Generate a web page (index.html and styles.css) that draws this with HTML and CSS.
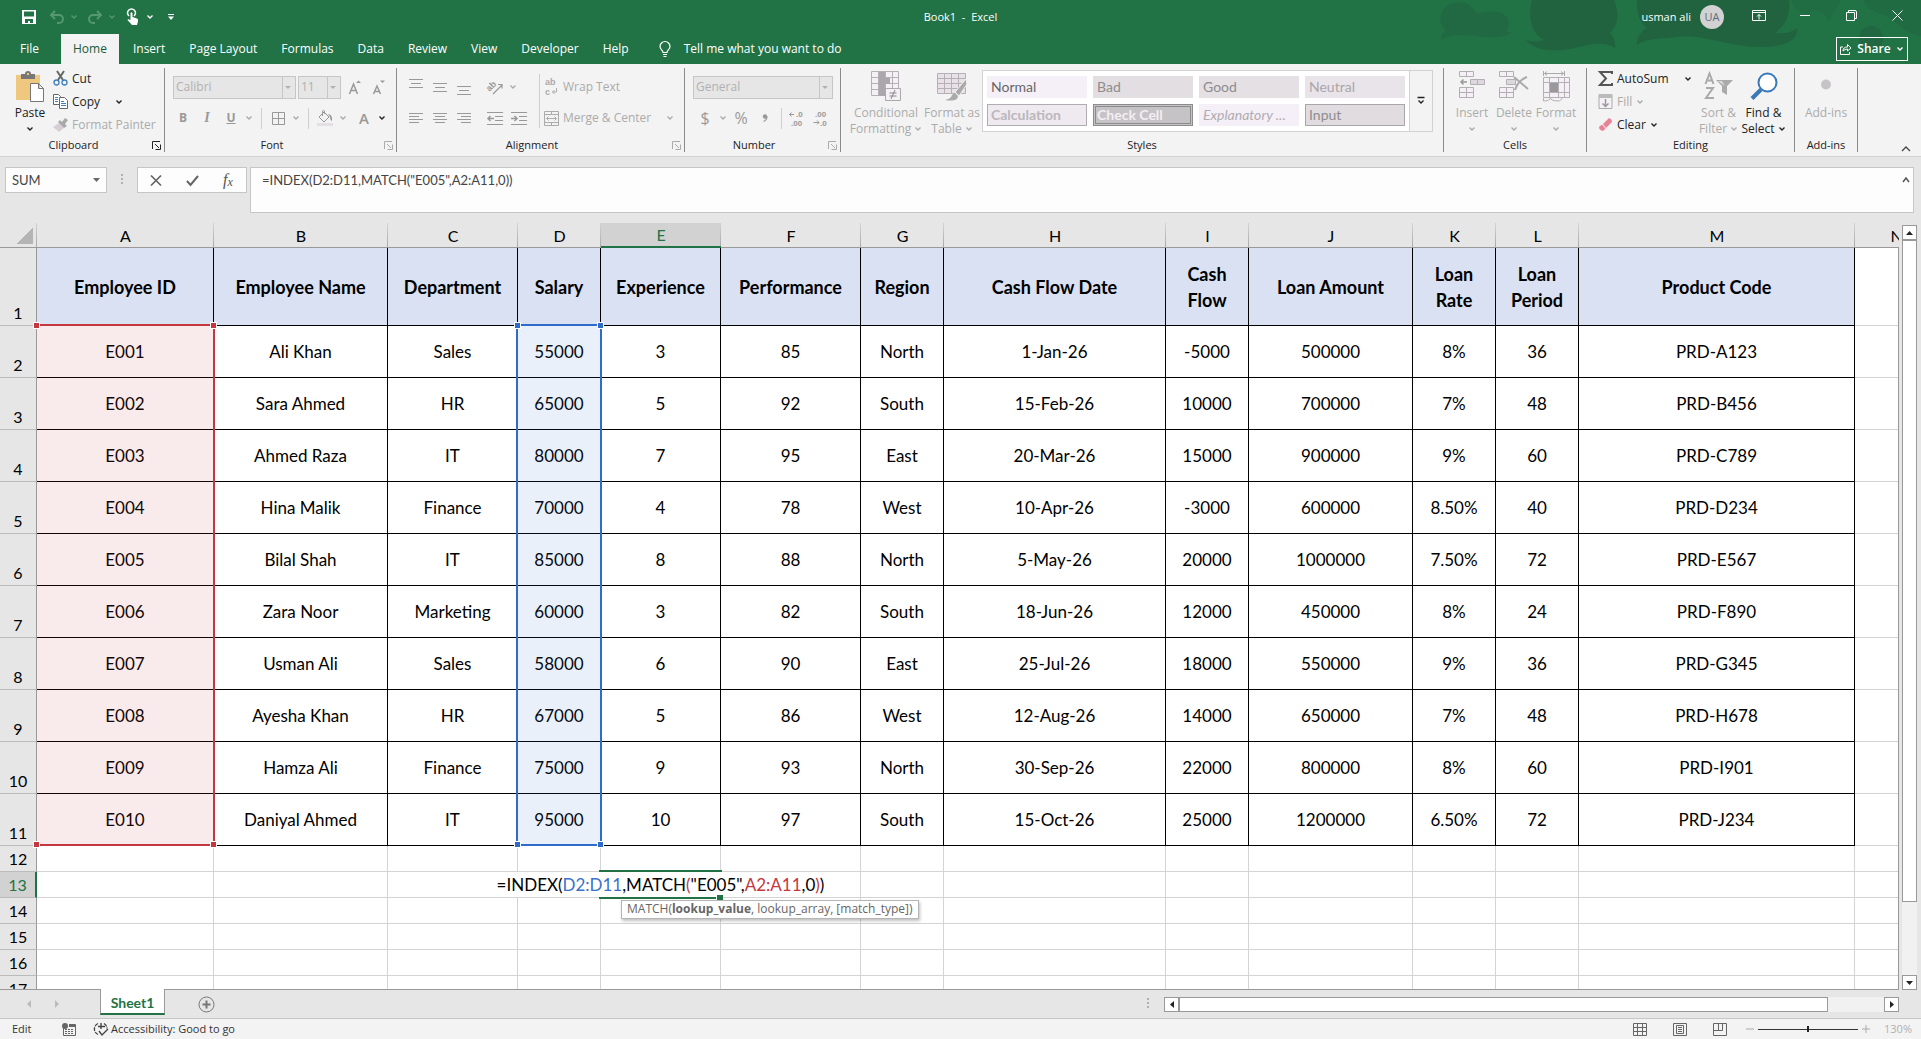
FILE: index.html
```html
<!DOCTYPE html>
<html lang="en">
<head>
    <meta charset="UTF-8">
    <meta name="viewport" content="width=device-width, initial-scale=1.0">
    <title>Book1 - Excel</title>
    <link rel="stylesheet" href="styles.css">
</head>
<body>
    <!-- shared glyphs -->
    <svg class="defs" aria-hidden="true">
        <symbol id="chev" viewBox="0 0 8 8"><path d="M1.5 2.5L4 5l2.5-2.5" fill="none" stroke="currentColor" stroke-width="1.4"/></symbol>
        <symbol id="launch" viewBox="0 0 9 9"><path d="M.5 8V.5H8M3 3l4 4M8.5 3.5v5h-5" fill="none" stroke="currentColor"/></symbol>
    </svg>

    <header class="top">
        <svg class="pattern" viewBox="0 0 520 64" aria-hidden="true">
            <g fill="#22633f">
                <path d="M40 14C44 2 62-2 72 8c2 4 4 6 8 5 14-4 28 0 28 10 0 6-2 8-4 9h7c-4 5-18 6-28 5-16-2-34-4-43 3 0-4 2-8 5-9-4-4-7-10-5-17z" opacity=".6"/>
                <path d="M131 0h82c6 14 4 26-4 33 4 4 6 10 5 15-10-7-24-4-40 0-22 5-44 2-49-9 5 4 12 2 18 1-14-8-16-24-12-40z"/>
                <path d="M236 0h152c2 14-4 26-14 33 10 1 18-1 22-5 2 12-12 19-38 19-32 0-58-14-82-10-18 2-34 2-40 8 0-8 4-14 10-17-8-6-11-16-10-28z"/>
                <circle cx="470" cy="38" r="12" opacity=".7"/>
                <path d="M462 0h58v36c-16-2-20-10-28-16s-26-8-30-20z" opacity=".5"/>
                <path d="M390 0h50c-4 8-8 14-12 22-4-10-14-16-22-8-6 0-14-6-16-14z" opacity=".4"/>
            </g>
        </svg>
        <div class="titlebar">
            <div class="quick">
                <button aria-label="Save"><svg width="14" height="14" viewBox="0 0 14 14"><path fill="#fff" fill-rule="evenodd" d="M0 0h14v14H0zM2 1.500v5h10v-5zM3 9v4h3v-2h2v2h3V9z"/></svg></button>
                <button aria-label="Undo" class="faint"><svg width="14" height="14" viewBox="0 0 14 14"><path d="M1 5h8a4 4 0 010 8H7M5 1L1 5l4 4" fill="none" stroke="currentColor" stroke-width="2"/></svg></button>
                <button aria-label="Undo list" class="faint small"><svg width="8" height="8"><use href="#chev"/></svg></button>
                <button aria-label="Redo" class="faint"><svg width="14" height="14" viewBox="0 0 14 14"><path d="M13 5H5a4 4 0 000 8h2M9 1l4 4-4 4" fill="none" stroke="currentColor" stroke-width="2"/></svg></button>
                <button aria-label="Redo list" class="faint small"><svg width="8" height="8"><use href="#chev"/></svg></button>
                <button aria-label="Touch mode"><svg width="12" height="17" viewBox="0 0 12 17"><path d="M2 7a4 4 0 115 0" fill="none" stroke="#fff" stroke-width="1.500"/><path fill="#fff" d="M3.500 4q1-1.500 2 0v4l4.500 1.500q1.500.5 1 3L10 16H5L.5 11q0-1.500 3 0z"/></svg></button>
                <button aria-label="Touch mode list" class="small"><svg width="8" height="8"><use href="#chev"/></svg></button>
                <button aria-label="Customize toolbar"><svg width="6" height="6" viewBox="0 0 6 6"><path d="M0 .5h6" stroke="#fff"/><path d="M0 2.500h6L3 6z" fill="#fff"/></svg></button>
            </div>
            <div class="title">Book1&nbsp; -&nbsp; Excel</div>
            <div class="account">
                <span>usman ali</span>
                <span class="avatar">UA</span>
                <button aria-label="Ribbon display options"><svg width="14" height="11" viewBox="0 0 14 11"><path d="M.5.5h13v10H.5zM.5 2.500h13M7 9.500V4.500M5 6.500l2-2 2 2" fill="none" stroke="#fff"/></svg></button>
                <button aria-label="Minimize"><svg width="10" height="11" viewBox="0 0 10 11"><path d="M0 5.500h10" stroke="#fff"/></svg></button>
                <button aria-label="Restore"><svg width="11" height="11" viewBox="0 0 11 11"><path d="M.5 2.500h8v8h-8zM2.500 2.500V.5H9q1.500 0 1.500 1.500v6.500h-2" fill="none" stroke="#fff"/></svg></button>
                <button aria-label="Close"><svg width="11" height="11" viewBox="0 0 11 11"><path d="M.5.5l10 10M10.500.5l-10 10" stroke="#fff"/></svg></button>
            </div>
        </div>
        <nav class="tabs">
            <a href="#" class="file">File</a>
            <a href="#" class="active">Home</a>
            <a href="#">Insert</a>
            <a href="#">Page Layout</a>
            <a href="#">Formulas</a>
            <a href="#">Data</a>
            <a href="#">Review</a>
            <a href="#">View</a>
            <a href="#">Developer</a>
            <a href="#">Help</a>
            <a href="#" class="tellme"><svg width="12" height="17" viewBox="0 0 12 17"><path d="M4 11.500C4 9 1 8.500 1 5.500a5 5 0 0110 0c0 3-3 3.500-3 6zM4 13.500h4M4.500 15.500h3" fill="none" stroke="#fff" stroke-width="1.200"/></svg>Tell me what you want to do</a>
            <button class="share"><svg width="12" height="12" viewBox="0 0 12 12"><path d="M3 4H.5v7.500h9V9M3 8q0-4 4.500-4V1.500L11 5 7.500 8V6Q5 6 3 8z" fill="none" stroke="#fff"/></svg>Share<svg width="8" height="8"><use href="#chev"/></svg></button>
        </nav>
    </header>

    <section class="ribbon">
        <div class="group clipboard">
            <div class="body">
                <button class="big paste">
                    <svg width="30" height="31" viewBox="0 0 30 31"><path fill="#edc87e" d="M1 4h24v25H1z"/><path fill="#777" d="M6 3h4q0-3 3-3t3 3h4v5H6z"/><path fill="#edc87e" d="M12 2h2v2h-2z"/><path d="M15.500 12.500h8l5 5v13h-13zM23.500 12.500v5h5" fill="#fff" stroke="#777"/></svg>
                    <span>Paste</span>
                    <svg width="8" height="8"><use href="#chev"/></svg>
                </button>
                <div class="stack">
                    <button><svg width="15" height="15" viewBox="0 0 15 15"><path d="M4 0l6 9M11 0L5 9" stroke="#666" stroke-width="2"/><circle cx="3.500" cy="11.500" r="2.500" fill="none" stroke="#3e7ebd" stroke-width="1.300"/><circle cx="11.500" cy="11.500" r="2.500" fill="none" stroke="#3e7ebd" stroke-width="1.300"/></svg>Cut</button>
                    <button><svg width="15" height="15" viewBox="0 0 15 15"><path d="M.5.5h5l2 2v8h-7z" fill="#fff" stroke="#666"/><path d="M2 3.500h3M2 5.500h3M2 7.500h3" stroke="#3e7ebd"/><path d="M6.500 3.500h5l3 3v8h-8z" fill="#fff" stroke="#666"/><path d="M8 7.500h3M8 9.500h5M8 11.500h5" stroke="#3e7ebd"/></svg>Copy<svg class="far" width="8" height="8"><use href="#chev"/></svg></button>
                    <button disabled><svg width="15" height="14" viewBox="0 0 15 14"><path fill="#d5cfd5" d="M0 9l6-4 5 5-5 4z"/><path fill="#a9a9a9" d="M5 4l2-2 2 2 3-4 3 2-3 4 2 2-3 2z"/></svg>Format Painter</button>
                </div>
            </div>
            <div class="caption"><span>Clipboard</span><button aria-label="Clipboard options"><svg width="9" height="9"><use href="#launch"/></svg></button></div>
        </div>

        <div class="group font">
            <div class="body rows">
                <div class="row">
                    <span class="combo name"><select aria-label="Font" disabled><option>Calibri</option></select></span>
                    <span class="combo size"><select aria-label="Font size" disabled><option>11</option></select></span>
                    <button class="tool" disabled aria-label="Increase font size"><svg width="14" height="15" viewBox="0 0 14 15"><path d="M1.500 14L5.500 4l4 10M3 10.500h5" fill="none" stroke="currentColor" stroke-width="1.500"/><path d="M8 3l2.500-2.500L13 3z" fill="currentColor"/></svg></button>
                    <button class="tool" disabled aria-label="Decrease font size"><svg width="14" height="15" viewBox="0 0 14 15"><path d="M1.500 14L5 6l3.500 8M3 11.500h4" fill="none" stroke="currentColor" stroke-width="1.500"/><path d="M8 .5h5L10.500 3z" fill="currentColor"/></svg></button>
                </div>
                <div class="row">
                    <button class="tool" disabled><b>B</b></button>
                    <button class="tool" disabled><i>I</i></button>
                    <button class="tool" disabled><u>U</u></button>
                    <button class="drop" disabled aria-label="Underline list"><svg width="8" height="8"><use href="#chev"/></svg></button>
                    <span class="line"></span>
                    <button class="tool" disabled aria-label="Borders"><svg width="13" height="13" viewBox="0 0 13 13"><path d="M.5.5h12v12H.5zM6.500.5v12M.5 6.500h12" fill="none" stroke="currentColor"/></svg></button>
                    <button class="drop" disabled aria-label="Borders list"><svg width="8" height="8"><use href="#chev"/></svg></button>
                    <span class="line"></span>
                    <button class="tool" disabled aria-label="Fill color"><svg width="16" height="16" viewBox="0 0 16 16"><path d="M0 13h16v3H0z" fill="#e5dfe3"/><path d="M2 7l5-5 5 5-5 5zM5.500 6V1q1.500-1.500 2 0v3" fill="none" stroke="currentColor"/><path d="M11 4q5 1 4 7-2-1-2-4z" fill="currentColor"/></svg></button>
                    <button class="drop" disabled aria-label="Fill color list"><svg width="8" height="8"><use href="#chev"/></svg></button>
                    <button class="tool letter" disabled>A</button>
                    <button class="drop" aria-label="Font color list"><svg width="8" height="8"><use href="#chev"/></svg></button>
                </div>
            </div>
            <div class="caption"><span>Font</span><button disabled aria-label="Font options"><svg width="9" height="9"><use href="#launch"/></svg></button></div>
        </div>

        <div class="group align">
            <div class="body">
                <div class="rows">
                    <div class="row">
                        <button class="tool" disabled aria-label="Top align"><svg width="14" height="16" viewBox="0 0 14 16"><path d="M0 .5h14M2 4.500h10M0 8.500h14" stroke="currentColor"/></svg></button>
                        <button class="tool" disabled aria-label="Middle align"><svg width="14" height="16" viewBox="0 0 14 16"><path d="M0 4.500h14M2 8.500h10M0 12.500h14" stroke="currentColor"/></svg></button>
                        <button class="tool" disabled aria-label="Bottom align"><svg width="14" height="16" viewBox="0 0 14 16"><path d="M0 7.500h14M2 11.500h10M0 15.500h14" stroke="currentColor"/></svg></button>
                        <span class="gap"></span>
                        <button class="tool" disabled aria-label="Orientation"><svg width="16" height="16" viewBox="0 0 16 16"><text x="0" y="9" font-size="9" font-weight="700" fill="currentColor" transform="rotate(-45 6 8)">ab</text><path d="M6 15l9-9M11 5.500h4v4" fill="none" stroke="currentColor" stroke-width="1.200"/></svg></button>
                        <button class="drop" disabled aria-label="Orientation list"><svg width="8" height="8"><use href="#chev"/></svg></button>
                    </div>
                    <div class="row">
                        <button class="tool" disabled aria-label="Align left"><svg width="14" height="11" viewBox="0 0 14 11"><path d="M0 .5h14M0 3.500h10M0 6.500h14M0 9.500h10" stroke="currentColor"/></svg></button>
                        <button class="tool" disabled aria-label="Center"><svg width="14" height="11" viewBox="0 0 14 11"><path d="M0 .5h14M2 3.500h10M0 6.500h14M2 9.500h10" stroke="currentColor"/></svg></button>
                        <button class="tool" disabled aria-label="Align right"><svg width="14" height="11" viewBox="0 0 14 11"><path d="M0 .5h14M4 3.500h10M0 6.500h14M4 9.500h10" stroke="currentColor"/></svg></button>
                        <span class="gap"></span>
                        <button class="tool" disabled aria-label="Decrease indent"><svg width="16" height="13" viewBox="0 0 16 13"><path d="M0 .5h16M8 4.500h8M8 8.500h8M0 12.500h16" stroke="currentColor"/><path d="M7 6.500H1M3.500 4L1 6.500 3.500 9" fill="none" stroke="currentColor" stroke-width="1.500"/></svg></button>
                        <button class="tool" disabled aria-label="Increase indent"><svg width="16" height="13" viewBox="0 0 16 13"><path d="M0 .5h16M8 4.500h8M8 8.500h8M0 12.500h16" stroke="currentColor"/><path d="M0 6.500h6M3.500 4L6 6.500 3.500 9" fill="none" stroke="currentColor" stroke-width="1.500"/></svg></button>
                    </div>
                </div>
                <span class="line tall"></span>
                <div class="rows">
                    <div class="row"><button class="wide" disabled><svg width="15" height="18" viewBox="0 0 15 18"><text x="1" y="7" font-size="9" font-weight="700" fill="currentColor">ab</text><text x="1" y="17" font-size="9" font-weight="700" fill="currentColor">c</text><path d="M12.500 10v4H8.500M10.500 12l-2 2 2 2" fill="none" stroke="currentColor"/></svg>Wrap Text</button></div>
                    <div class="row"><button class="wide" disabled><svg width="15" height="15" viewBox="0 0 15 15"><path d="M.5.5h14v14H.5zM.5 3.500h14M.5 11.500h14M7.500.5v3M7.500 11.500v3M2.500 7.500h10M4.500 5.500l-2 2 2 2M10.500 5.500l2 2-2 2" fill="none" stroke="currentColor"/></svg>Merge &amp; Center<svg class="far" width="8" height="8"><use href="#chev"/></svg></button></div>
                </div>
            </div>
            <div class="caption"><span>Alignment</span><button disabled aria-label="Alignment options"><svg width="9" height="9"><use href="#launch"/></svg></button></div>
        </div>

        <div class="group number">
            <div class="body rows">
                <div class="row"><span class="combo format"><select aria-label="Number format" disabled><option>General</option></select></span></div>
                <div class="row marks">
                    <button class="tool sign" disabled>$</button>
                    <button class="drop" disabled aria-label="Currency list"><svg width="8" height="8"><use href="#chev"/></svg></button>
                    <button class="tool sign pct" disabled>%</button>
                    <button class="tool" disabled aria-label="Comma style"><svg width="6" height="8" viewBox="0 0 6 8"><circle cx="3" cy="2.500" r="2.200" fill="currentColor"/><path d="M5 2.500Q5 6 1.500 7.500" fill="none" stroke="currentColor" stroke-width="1.300"/></svg></button>
                    <span class="line"></span>
                    <button class="tool" disabled aria-label="Increase decimal"><svg width="15" height="16" viewBox="0 0 15 16"><path d="M5 4.500H.5M2.500 2.500l-2 2 2 2" fill="none" stroke="currentColor"/><text x="7" y="7" font-size="8" font-weight="700" fill="currentColor">.0</text><text x="2" y="16" font-size="8" font-weight="700" fill="currentColor">.00</text></svg></button>
                    <button class="tool" disabled aria-label="Decrease decimal"><svg width="15" height="16" viewBox="0 0 15 16"><path d="M.5 12.500H6M4 10.500l2 2-2 2" fill="none" stroke="currentColor"/><text x="2" y="7" font-size="8" font-weight="700" fill="currentColor">.00</text><text x="7" y="16" font-size="8" font-weight="700" fill="currentColor">.0</text></svg></button>
                </div>
            </div>
            <div class="caption"><span>Number</span><button disabled aria-label="Number options"><svg width="9" height="9"><use href="#launch"/></svg></button></div>
        </div>

        <div class="group styles">
            <div class="body">
                <button class="big cond" disabled>
                    <svg width="30" height="31" viewBox="0 0 30 31"><path d="M.5.500h27v24H.5zM.5 6.500h27M.5 12.500h27M.5 18.500h27M7.500.5v24M14.500.5v24M21.500.5v24" fill="#f5eff6" stroke="#b5b0b4"/><path fill="#aaa6aa" d="M8 1h6v6h5v6h-5v12H8z"/><path d="M14.500 17.500h15v12h-15z" fill="#f5eff6" stroke="#aaa"/><path d="M18.500 22h7M18.500 25h7M24 19l-4 9" stroke="#888"/></svg>
                    <span>Conditional</span>
                    <span>Formatting <svg width="8" height="8"><use href="#chev"/></svg></span>
                </button>
                <button class="big fmt" disabled>
                    <svg width="30" height="31" viewBox="0 0 30 31"><path d="M.5 2.500h28v20H.5zM.5 7.500h28M.5 12.500h28M.5 17.500h28M7.500 2.500v20M14.500 2.500v20M21.500 2.500v20" fill="#e8e2e8" stroke="#b5b0b4"/><path d="M29 8L18 21l4 4 8-12z" fill="#aaa" stroke="#f3f3f3"/><path d="M8 29q6-1 7-5 3-3 6 1 0 6-13 4z" fill="#aaa"/></svg>
                    <span>Format as</span>
                    <span>Table <svg width="8" height="8"><use href="#chev"/></svg></span>
                </button>
                <div class="gallery">
                    <div class="swatches">
                        <button class="normal">Normal</button>
                        <button class="bad">Bad</button>
                        <button class="good">Good</button>
                        <button class="neutral">Neutral</button>
                        <button class="calc">Calculation</button>
                        <button class="check">Check Cell</button>
                        <button class="expl">Explanatory ...</button>
                        <button class="input">Input</button>
                    </div>
                    <button class="more" aria-label="More styles"><svg width="8" height="8" viewBox="0 0 8 8"><path d="M.5.500h7M1.500 3.500L4 6l2.500-2.500" fill="none" stroke="#222" stroke-width="1.300"/></svg></button>
                </div>
            </div>
            <div class="caption"><span>Styles</span></div>
        </div>

        <div class="group cells">
            <div class="body">
                <button class="big" disabled>
                    <svg width="28" height="31" viewBox="0 0 28 31"><g fill="#f5eff6" stroke="#b3aeb3"><path d="M1.500.5h14v5h-14zM8.500.5v5"/><path d="M12.500 8.500h14v5h-14zM19.500 8.500v5" fill="#ddd8dd"/><path d="M1.500 16.500h14v10h-14zM8.500 16.500v10M1.500 21.500h14"/></g><path d="M9 11H3M5.500 8.500L3 11l2.500 2.500" fill="none" stroke="#999" stroke-width="1.500"/></svg>
                    <span>Insert</span>
                    <svg width="8" height="8"><use href="#chev"/></svg>
                </button>
                <button class="big" disabled>
                    <svg width="30" height="31" viewBox="0 0 30 31"><g fill="#f5eff6" stroke="#b3aeb3"><path d="M.5.5h14v5H.5zM7.500.5v5"/><path d="M7.500 8.500h9v5h-9z" fill="#ddd8dd"/><path d="M.5 16.500h14v10H.5zM7.500 16.500v10M.5 21.500h14"/></g><path d="M15 6l14 12M28 6q-9 3-12 13" fill="none" stroke="#aaa" stroke-width="2"/></svg>
                    <span>Delete</span>
                    <svg width="8" height="8"><use href="#chev"/></svg>
                </button>
                <button class="big" disabled>
                    <svg width="29" height="31" viewBox="0 0 29 31"><path d="M1.500 0v5M22.500 0v5M2 2.500h20M5 .5l-2.500 2L5 4.500M19 .5l2.500 2-2.500 2" fill="none" stroke="#aaa"/><path d="M1.500 6.500h26v20h-26zM1.500 11.500h26M1.500 21.500h26M7.500 6.500v20M16.500 6.500v20M22.500 6.500v20" fill="#f5eff6" stroke="#b5b0b4"/><path d="M8 12h8v9H8z" fill="#999"/><path d="M1.500 27v3q6 0 7-3 0 3 9 3l3-3" fill="none" stroke="#b5b0b4"/></svg>
                    <span>Format</span>
                    <svg width="8" height="8"><use href="#chev"/></svg>
                </button>
            </div>
            <div class="caption"><span>Cells</span></div>
        </div>

        <div class="group editing">
            <div class="body">
                <div class="stack">
                    <button><svg width="15" height="15" viewBox="0 0 15 15"><path d="M14 3V1H2l6 6.500L2 14h12v-2" fill="none" stroke="#555" stroke-width="2"/></svg>AutoSum<svg class="far" width="8" height="8"><use href="#chev"/></svg></button>
                    <button disabled><svg width="15" height="15" viewBox="0 0 15 15"><path d="M1 .5h13v14H1z" fill="#f5eff6" stroke="currentColor"/><path d="M1 0h13v4H1z" fill="#bbb"/><path d="M7.500 5v7M4.500 9.500l3 3 3-3" fill="none" stroke="#999" stroke-width="1.500"/></svg>Fill<svg width="8" height="8"><use href="#chev"/></svg></button>
                    <button><svg width="15" height="14" viewBox="0 0 15 14"><path fill="#ea8296" d="M5 6l6-6q3 1 3 4L8 10z"/><path fill="#ea8296" d="M1 9l3-2.500 3.500 4L5 13q-4-1-4-4z"/></svg>Clear<svg width="8" height="8"><use href="#chev"/></svg></button>
                </div>
                <button class="big" disabled>
                    <svg width="30" height="29" viewBox="0 0 30 29"><path d="M1.500 12l4-10.500 4 10.500M3 8.500h5M2 16h7L2 26h8" fill="none" stroke="#aaa" stroke-width="2"/><path d="M12 8h17l-6 6v9l-5-3v-6z" fill="#aaa"/><path d="M14 9h4l3 5z" fill="#ddd"/></svg>
                    <span>Sort &amp;</span>
                    <span>Filter <svg width="8" height="8"><use href="#chev"/></svg></span>
                </button>
                <button class="big">
                    <svg width="28" height="28" viewBox="0 0 28 28"><path d="M2 26l9-9" stroke="#3b78b8" stroke-width="4"/><circle cx="17.500" cy="10" r="9" fill="#fff" stroke="#3b78b8" stroke-width="2"/></svg>
                    <span>Find &amp;</span>
                    <span>Select <svg width="8" height="8"><use href="#chev"/></svg></span>
                </button>
            </div>
            <div class="caption"><span>Editing</span></div>
        </div>

        <div class="group addins">
            <div class="body">
                <button class="big" disabled>
                    <svg width="28" height="28" viewBox="0 0 28 28"><circle cx="14" cy="12" r="5" fill="#c6c4c6"/></svg>
                    <span>Add-ins</span>
                </button>
            </div>
            <div class="caption"><span>Add-ins</span></div>
        </div>
        <button class="collapse" aria-label="Collapse ribbon"><svg width="10" height="6" viewBox="0 0 10 6"><path d="M1 5l4-4 4 4" fill="none" stroke="#444" stroke-width="1.300"/></svg></button>
    </section>

    <section class="formulabar">
        <div class="namebox"><input type="text" aria-label="Name box" value="SUM"><button aria-label="Names"><svg width="7" height="4" viewBox="0 0 7 4"><path d="M0 0h7L3.500 4z" fill="#666"/></svg></button></div>
        <span class="dots"></span>
        <div class="entry">
            <button aria-label="Cancel"><svg width="12" height="11" viewBox="0 0 12 11"><path d="M1 .5l10 10M11 .5l-10 10" stroke="#666" stroke-width="1.700"/></svg></button>
            <button aria-label="Enter"><svg width="13" height="11" viewBox="0 0 13 11"><path d="M1 6l3.500 4L12 1" fill="none" stroke="#666" stroke-width="2"/></svg></button>
            <button aria-label="Insert function" class="fx">f<small>x</small></button>
        </div>
        <div class="formula">
            <textarea aria-label="Formula" rows="2" spellcheck="false">=INDEX(D2:D11,MATCH("E005",A2:A11,0))</textarea>
            <button aria-label="Collapse formula bar"><svg width="8" height="6" viewBox="0 0 8 6"><path d="M1 5l3-4 3 4" fill="none" stroke="#555" stroke-width="1.500"/></svg></button>
        </div>
    </section>

    <main class="work">
        <div class="grid">
            <table>
                <colgroup>
                    <col class="c-row"><col class="c-a"><col class="c-b"><col class="c-c"><col class="c-s"><col class="c-e"><col class="c-f"><col class="c-s"><col class="c-h"><col class="c-s"><col class="c-j"><col class="c-s"><col class="c-s"><col class="c-m"><col class="c-s">
                </colgroup>
                <thead>
                    <tr><th class="corner"></th><th>A</th><th>B</th><th>C</th><th>D</th><th class="on">E</th><th>F</th><th>G</th><th>H</th><th>I</th><th>J</th><th>K</th><th>L</th><th>M</th><th>N</th></tr>
                </thead>
                <tbody class="data">
                    <tr class="head"><th>1</th><td>Employee ID</td><td>Employee Name</td><td>Department</td><td>Salary</td><td>Experience</td><td>Performance</td><td>Region</td><td>Cash Flow Date</td><td>Cash Flow</td><td>Loan Amount</td><td>Loan Rate</td><td>Loan Period</td><td>Product Code</td><td></td></tr>
                    <tr><th>2</th><td>E001<span class="range red"><i></i><i></i><i></i><i></i></span></td><td>Ali Khan</td><td>Sales</td><td>55000<span class="range blue"><i></i><i></i><i></i><i></i></span></td><td>3</td><td>85</td><td>North</td><td>1-Jan-26</td><td>-5000</td><td>500000</td><td>8%</td><td>36</td><td>PRD-A123</td><td></td></tr>
                    <tr><th>3</th><td>E002</td><td>Sara Ahmed</td><td>HR</td><td>65000</td><td>5</td><td>92</td><td>South</td><td>15-Feb-26</td><td>10000</td><td>700000</td><td>7%</td><td>48</td><td>PRD-B456</td><td></td></tr>
                    <tr><th>4</th><td>E003</td><td>Ahmed Raza</td><td>IT</td><td>80000</td><td>7</td><td>95</td><td>East</td><td>20-Mar-26</td><td>15000</td><td>900000</td><td>9%</td><td>60</td><td>PRD-C789</td><td></td></tr>
                    <tr><th>5</th><td>E004</td><td>Hina Malik</td><td>Finance</td><td>70000</td><td>4</td><td>78</td><td>West</td><td>10-Apr-26</td><td>-3000</td><td>600000</td><td>8.50%</td><td>40</td><td>PRD-D234</td><td></td></tr>
                    <tr><th>6</th><td>E005</td><td>Bilal Shah</td><td>IT</td><td>85000</td><td>8</td><td>88</td><td>North</td><td>5-May-26</td><td>20000</td><td>1000000</td><td>7.50%</td><td>72</td><td>PRD-E567</td><td></td></tr>
                    <tr><th>7</th><td>E006</td><td>Zara Noor</td><td>Marketing</td><td>60000</td><td>3</td><td>82</td><td>South</td><td>18-Jun-26</td><td>12000</td><td>450000</td><td>8%</td><td>24</td><td>PRD-F890</td><td></td></tr>
                    <tr><th>8</th><td>E007</td><td>Usman Ali</td><td>Sales</td><td>58000</td><td>6</td><td>90</td><td>East</td><td>25-Jul-26</td><td>18000</td><td>550000</td><td>9%</td><td>36</td><td>PRD-G345</td><td></td></tr>
                    <tr><th>9</th><td>E008</td><td>Ayesha Khan</td><td>HR</td><td>67000</td><td>5</td><td>86</td><td>West</td><td>12-Aug-26</td><td>14000</td><td>650000</td><td>7%</td><td>48</td><td>PRD-H678</td><td></td></tr>
                    <tr><th>10</th><td>E009</td><td>Hamza Ali</td><td>Finance</td><td>75000</td><td>9</td><td>93</td><td>North</td><td>30-Sep-26</td><td>22000</td><td>800000</td><td>8%</td><td>60</td><td>PRD-I901</td><td></td></tr>
                    <tr><th>11</th><td>E010</td><td>Daniyal Ahmed</td><td>IT</td><td>95000</td><td>10</td><td>97</td><td>South</td><td>15-Oct-26</td><td>25000</td><td>1200000</td><td>6.50%</td><td>72</td><td>PRD-J234</td><td></td></tr>
                </tbody>
                <tbody class="blank">
                    <tr><th>12</th><td></td><td></td><td></td><td></td><td></td><td></td><td></td><td></td><td></td><td></td><td></td><td></td><td></td><td></td></tr>
                    <tr><th class="on">13</th><td></td><td></td><td></td><td></td><td class="editing-cell"><div class="edit"><span>=INDEX(<span class="ref-blue">D2:D11</span>,MATCH<span class="ref-red">(</span>"E005",<span class="ref-red">A2:A11</span>,0<span class="ref-red">)</span>)</span></div><div class="frame"></div><div class="hint">MATCH(<b>lookup_value</b>, lookup_array, [match_type])</div></td><td></td><td></td><td></td><td></td><td></td><td></td><td></td><td></td><td></td></tr>
                    <tr><th>14</th><td></td><td></td><td></td><td></td><td></td><td></td><td></td><td></td><td></td><td></td><td></td><td></td><td></td><td></td></tr>
                    <tr><th>15</th><td></td><td></td><td></td><td></td><td></td><td></td><td></td><td></td><td></td><td></td><td></td><td></td><td></td><td></td></tr>
                    <tr><th>16</th><td></td><td></td><td></td><td></td><td></td><td></td><td></td><td></td><td></td><td></td><td></td><td></td><td></td><td></td></tr>
                    <tr><th>17</th><td></td><td></td><td></td><td></td><td></td><td></td><td></td><td></td><td></td><td></td><td></td><td></td><td></td><td></td></tr>
                </tbody>
            </table>
        </div>
        <div class="vscroll">
            <button aria-label="Scroll up"><svg width="7" height="4" viewBox="0 0 7 4"><path d="M0 4h7L3.500 0z" fill="#222"/></svg></button>
            <div class="track"><div class="thumb"></div></div>
            <button aria-label="Scroll down"><svg width="7" height="4" viewBox="0 0 7 4"><path d="M0 0h7L3.500 4z" fill="#222"/></svg></button>
        </div>
    </main>

    <div class="sheets">
        <button class="nav" aria-label="Previous sheet"><svg width="4" height="8" viewBox="0 0 4 8"><path d="M4 0v8L0 4z" fill="#bbb"/></svg></button>
        <button class="nav" aria-label="Next sheet"><svg width="4" height="8" viewBox="0 0 4 8"><path d="M0 0v8l4-4z" fill="#bbb"/></svg></button>
        <a href="#" class="sheet">Sheet1</a>
        <button class="add" aria-label="New sheet"><svg width="17" height="17" viewBox="0 0 17 17"><circle cx="8.500" cy="8.500" r="7.500" fill="none" stroke="#777"/><path d="M8.500 4.500v8M4.500 8.500h8" stroke="#777" stroke-width="2"/></svg></button>
        <span class="dots"></span>
        <div class="hscroll">
            <button aria-label="Scroll left"><svg width="4" height="7" viewBox="0 0 4 7"><path d="M4 0v7L0 3.500z" fill="#222"/></svg></button>
            <div class="track"><div class="thumb"></div></div>
            <button aria-label="Scroll right"><svg width="4" height="7" viewBox="0 0 4 7"><path d="M0 0v7l4-3.500z" fill="#222"/></svg></button>
        </div>
    </div>

    <footer class="status">
        <span class="mode">Edit</span>
        <button aria-label="Record macro"><svg width="14" height="13" viewBox="0 0 14 13"><path d="M1.500 5v7.500h12v-11H7" fill="none" stroke="#666"/><circle cx="3" cy="3" r="3" fill="#666"/><path d="M7 1h6v3H7z" fill="#666"/><path d="M3 6.500h9M3 8.500h9M3 10.500h9" stroke="#666" stroke-dasharray="2 1"/></svg></button>
        <button class="access"><svg width="16" height="14" viewBox="0 0 16 14"><path d="M5 1.500A6 6 0 005 12.500M11 1.500q3 2 3 5" fill="none" stroke="#444" stroke-width="1.300" stroke-dasharray="4 1"/><path d="M8 1v6M5 4.500h7M6 9l3 4 6-6" fill="none" stroke="#444" stroke-width="1.400"/></svg>Accessibility: Good to go</button>
        <div class="views">
            <button aria-label="Normal view"><svg width="14" height="13" viewBox="0 0 14 13"><path d="M.5.500h13v12H.5zM.5 4.500h13M.5 8.500h13M4.500.5v12M9.500.5v12" fill="none" stroke="#666"/></svg></button>
            <button aria-label="Page layout view"><svg width="14" height="13" viewBox="0 0 14 13"><path d="M.5.500h13v12H.5zM3.500 2.500h7v8h-7zM5 4.500h4M5 6.500h4M5 8.500h4" fill="none" stroke="#666"/></svg></button>
            <button aria-label="Page break view"><svg width="14" height="13" viewBox="0 0 14 13"><path d="M.5.500h13v12H.5zM.5 7.500h9v-7M5.500.5v7" fill="none" stroke="#666"/></svg></button>
        </div>
        <div class="zoom">
            <button disabled aria-label="Zoom out"><svg width="8" height="8" viewBox="0 0 8 8"><path d="M0 4h8" stroke="#aaa"/></svg></button>
            <input type="range" min="0" max="100" value="50" aria-label="Zoom">
            <button disabled aria-label="Zoom in"><svg width="8" height="8" viewBox="0 0 8 8"><path d="M0 4h8M4 0v8" stroke="#aaa"/></svg></button>
            <span>130%</span>
        </div>
    </footer>
</body>
</html>
```
FILE: styles.css
```css
* {
    box-sizing: border-box;
}
body {
    margin: 0;
    height: 100vh;
    display: flex;
    flex-direction: column;
    overflow: hidden;
    background: #e6e6e6;
    color: #222;
    font: 11px/16px "Open Sans", "Noto Sans", sans-serif;
}
button, input, select, textarea {
    font: inherit;
    color: inherit;
    background: none;
    border: none;
    margin: 0;
    padding: 0;
    outline: none;
}
button {
    display: flex;
    align-items: center;
    justify-content: center;
    white-space: nowrap;
}
button:disabled {
    color: #ababab;
}
a {
    color: inherit;
    text-decoration: none;
}
svg {
    display: block;
    flex: none;
    overflow: visible;
}
svg text {
    font-family: "Liberation Sans", sans-serif;
}
.defs {
    position: absolute;
    width: 0;
    height: 0;
}

/* title bar and tabs */
.top {
    position: relative;
    background: #217346;
    color: #fff;
}
.pattern {
    position: absolute;
    top: 0;
    right: 0;
    width: 520px;
    height: 64px;
    overflow: hidden;
}
.titlebar {
    position: relative;
    display: grid;
    grid-template-columns: 1fr auto 1fr;
    align-items: center;
    height: 34px;
}
.quick {
    display: flex;
    align-items: center;
    padding-left: 18px;
}
.quick button {
    width: 22px;
    height: 24px;
    margin-right: 6px;
}
.quick .small {
    width: 12px;
    margin: 0 4px 0 -6px;
}
.faint {
    color: #55976f;
}
.account {
    display: flex;
    align-items: center;
    justify-content: flex-end;
    padding-right: 1px;
}
.account button {
    width: 46px;
    height: 28px;
    padding-bottom: 4px;
}
.avatar {
    width: 24px;
    height: 24px;
    margin: 0 12px 0 9px;
    border-radius: 50%;
    background: #d2d2d2;
    color: #5d6b80;
    line-height: 24px;
    text-align: center;
}
.tabs {
    position: relative;
    display: flex;
    height: 30px;
    font-size: 12px;
}
.tabs a {
    padding: 7px 12px 0;
}
.tabs .file {
    padding: 7px 22px 0 20px;
}
.tabs .active {
    background: #f3f3f3;
    color: #185c37;
    margin-right: 2px;
}
.tabs .tellme {
    display: flex;
    gap: 13px;
    padding-left: 18px;
}
.share {
    gap: 5px;
    width: 72px;
    height: 24px;
    margin: 3px 13px 0 auto;
    border: 1px solid #fff;
    font-weight: 600;
}

/* ribbon */
.ribbon {
    display: flex;
    height: 93px;
    background: #f3f3f3;
    border-bottom: 1px solid #d2d2d2;
    font-size: 12px;
}
.group {
    display: flex;
    flex-direction: column;
    margin: 4px 0;
    border-right: 1px solid #8a8a8a;
}
.body {
    display: flex;
    height: 72px;
}
.caption {
    display: flex;
    padding-top: 1px;
    font-size: 11px;
    line-height: 14px;
}
.caption span {
    flex: 1;
    text-align: center;
}
.caption button {
    justify-content: flex-end;
    width: 17px;
    height: 14px;
    padding-right: 3px;
}
.clipboard { width: 165px; }
.font { width: 232px; }
.align { width: 288px; }
.number { width: 156px; }
.styles { width: 603px; }
.cells { width: 143px; }
.editing { width: 208px; }
.addins { width: 63px; }

.big {
    flex-direction: column;
    justify-content: flex-start;
    width: 42px;
    padding-top: 3px;
}
.big > svg:first-child {
    margin-bottom: 3px;
    height: 31px;
}
.big > svg:last-child {
    margin-top: 4px;
}
.big span {
    display: flex;
    align-items: center;
    gap: 3px;
}
.paste {
    width: 32px;
    margin: 0 7px 0 14px;
}
.stack {
    display: flex;
    flex-direction: column;
    margin-top: -1px;
}
.stack button {
    gap: 4px;
    height: 23px;
    justify-content: flex-start;
}
.far {
    margin-left: 11px;
}
.rows {
    display: flex;
    flex-direction: column;
}
.row {
    display: flex;
    align-items: center;
    height: 24px;
    margin-top: 7px;
}
.tool, .tool:disabled {
    width: 24px;
    height: 24px;
    color: #999;
}
.tool i {
    font-family: "Liberation Serif", serif;
    font-weight: bold;
    font-size: 14px;
}
.tool u {
    font-weight: bold;
}
.drop {
    width: 12px;
    height: 24px;
}
.letter {
    margin-left: 3px;
    font-size: 15px;
    font-weight: 600;
}
.sign {
    font-size: 16px;
}
.line {
    width: 1px;
    height: 21px;
    margin: 0 4px 0 6px;
    background: #d0d0d0;
}
.line.tall {
    height: 54px;
    margin: 6px 4px 0 8px;
}
.font .body {
    padding-left: 6px;
}
.combo {
    position: relative;
    height: 23px;
    border: 1px solid #c6c6c6;
    background: #e6e6e6;
}
.combo select {
    appearance: none;
    width: 100%;
    height: 21px;
    padding-left: 2px;
    color: #b1b1b1;
    opacity: 1;
}
.combo::before {
    content: "";
    position: absolute;
    top: 0;
    right: 12px;
    width: 1px;
    height: 21px;
    background: #c6c6c6;
}
.combo::after {
    content: "";
    position: absolute;
    top: 9px;
    right: 4px;
    border: 3px solid transparent;
    border-top-color: #b1b1b1;
    border-bottom: 0;
}
.combo.name {
    width: 123px;
    margin: 0 2px;
}
.combo.size {
    width: 43px;
    margin-right: 2px;
}
.combo.format {
    width: 140px;
    margin-left: 3px;
}
.align .body {
    padding-left: 7px;
}
.gap {
    width: 7px;
    height: 24px;
}
.wide {
    gap: 4px;
    height: 24px;
}
.number .body {
    padding-left: 5px;
}
.marks {
    padding-left: 3px;
}
.marks .line {
    margin: 0 2px 0 4px;
}
.pct {
    width: 27px;
}
.styles .big {
    width: 72px;
}
.styles .cond {
    margin-left: 9px;
}
.styles .fmt {
    width: 60px;
}
.gallery {
    display: flex;
    height: 62px;
    margin-top: 2px;
    border: 1px solid #d2d2d2;
    background: #fff;
}
.swatches {
    display: grid;
    grid-template-columns: repeat(4, 100px);
    grid-auto-rows: 22px;
    gap: 6px;
    padding: 5px 4px;
}
.swatches button {
    justify-content: flex-start;
    padding-left: 4px;
    font: 14px/20px Lato, sans-serif;
    color: #8f8c8f;
}
.swatches .normal { background: #f5f0f7; color: #666; }
.swatches .bad { background: #e2dee1; }
.swatches .good { background: #e4e0e3; }
.swatches .neutral { background: #e9e4ea; color: #aaa6aa; }
.swatches .calc { background: #efe9f0; border: 1px solid #b0acb0; color: #bbb7bb; font-weight: bold; padding-left: 3px; }
.swatches .check { background: #c5c3c5; border: 3px double #8c8c8c; color: #f3eff3; font-weight: bold; padding-left: 1px; }
.swatches .expl { background: #f5f0f7; color: #b0acb0; font-style: italic; }
.swatches .input { background: #e0dce0; border: 1px solid #aaa6aa; padding-left: 3px; }
.more {
    width: 23px;
    border-left: 1px solid #d2d2d2;
    background: #f3f3f3;
}
.cells .body {
    padding-left: 7px;
}
.editing .body {
    padding-left: 11px;
}
.editing .stack {
    width: 98px;
}
.editing .big {
    width: 45px;
}
.addins .big {
    width: 62px;
}
.collapse {
    align-self: flex-end;
    width: 30px;
    height: 14px;
    margin-left: auto;
}

/* formula bar */
.formulabar {
    display: flex;
    height: 66px;
    padding: 10px 7px 0 5px;
    color: #444;
}
.namebox, .entry {
    display: flex;
    height: 26px;
    border: 1px solid #c6c6c6;
    background: #fdfdfd;
}
.namebox {
    width: 102px;
}
.namebox input {
    width: 80px;
    padding-left: 6px;
    font: 13px/20px Lato, sans-serif;
}
.namebox button {
    width: 20px;
}
.dots {
    width: 2px;
    height: 11px;
    background: repeating-linear-gradient(#b0b0b0 0 2px, transparent 2px 4px);
}
.formulabar .dots {
    margin: 7px 14px;
}
.entry {
    width: 110px;
    margin-right: 3px;
}
.entry button {
    flex: 1;
}
.entry .fx {
    font: italic 16px "Liberation Serif", serif;
    color: #555;
}
.fx small {
    font-size: 12px;
    padding-top: 4px;
}
.formula {
    display: flex;
    flex: 1;
    height: 46px;
    border: 1px solid #c6c6c6;
    background: #fdfdfd;
}
.formula textarea {
    flex: 1;
    resize: none;
    padding: 3px 0 0 11px;
    font: 13px/18px Lato, sans-serif;
    overflow: hidden;
}
.formula button {
    width: 14px;
    height: 24px;
}

/* sheet */
.work {
    display: flex;
    flex: 1;
    min-height: 0;
}
.grid {
    position: relative;
    flex: 1;
    min-width: 0;
    overflow: hidden;
    border-bottom: 1px solid #999;
}
.grid::after {
    content: "";
    position: absolute;
    top: 24px;
    right: 0;
    bottom: 0;
    width: 1px;
    background: #999;
}
table {
    table-layout: fixed;
    width: 1938px;
    border-collapse: separate;
    border-spacing: 0;
    font: 17px/26px Lato, sans-serif;
    color: #000;
}
.c-row { width: 37px; }
.c-a { width: 177px; }
.c-b { width: 174px; }
.c-c { width: 130px; }
.c-s { width: 83px; }
.c-e { width: 120px; }
.c-f { width: 140px; }
.c-h { width: 222px; }
.c-j { width: 164px; }
.c-m { width: 276px; }
th, td {
    padding: 0;
    text-align: center;
}
th {
    font-size: 16px;
    font-weight: normal;
}
thead th {
    height: 25px;
    line-height: 23px;
    border-bottom: 1px solid #999;
    background: linear-gradient(#d4d4d4, #a8a8a8) right / 1px 100% no-repeat #e6e6e6;
}
thead .on {
    background-color: #d2d2d2;
    border-bottom: 2px solid #217346;
    color: #217346;
}
thead .corner {
    background: linear-gradient(#d4d4d4, #a8a8a8) right / 1px 100% no-repeat, linear-gradient(135deg, transparent 50%, #b4b4b4 50%) 16px 4px / 17px 17px no-repeat;
}
tbody th {
    vertical-align: bottom;
    line-height: 24px;
    border-right: 1px solid #999;
    border-bottom: 1px solid #bbb;
    background: #e6e6e6;
}
tbody th.on {
    background: #d2d2d2;
    border-right: 2px solid #217346;
    color: #217346;
}
td {
    position: relative;
    background: #fff;
    border-right: 1px solid #d4d4d4;
    border-bottom: 1px solid #d4d4d4;
}
.data tr {
    height: 52px;
}
.data td {
    border-color: #000;
}
.data td:last-child {
    border-color: #d4d4d4;
}
.data .head {
    height: 78px;
}
.head td {
    padding: 0 8px;
    font-size: 18px;
    font-weight: bold;
    background: #d9e1f2;
}
.head td:last-child {
    background: #fff;
}
.blank tr {
    height: 26px;
}
.range {
    position: absolute;
    z-index: 1;
    top: -2px;
    left: -2px;
    width: calc(100% + 4px);
    height: 522px;
    border: 2px solid;
}
.range.red {
    left: 0;
    width: calc(100% + 2px);
    border-color: #c5373f;
    border-left-width: 0;
    background: rgba(197, 55, 63, 0.1);
    color: #c5373f;
}
.range.blue {
    border-color: #2f6bc8;
    background: rgba(47, 107, 200, 0.1);
    color: #2f6bc8;
}
.range i {
    position: absolute;
    width: 7px;
    height: 7px;
    background: currentColor;
    border: 1px solid #fff;
}
.range i:nth-child(odd) { left: -4px; }
.range i:nth-child(even) { right: -4px; }
.range i:nth-child(-n+2) { top: -4px; }
.range i:nth-child(n+3) { bottom: -4px; }
.edit {
    position: absolute;
    z-index: 2;
    inset: 0 -130px;
    display: flex;
    justify-content: center;
    white-space: nowrap;
}
.edit > span {
    padding: 0 4px;
    background: #fff;
}
.ref-blue { color: #3b71ca; }
.ref-red { color: #c5373f; }
.frame {
    position: absolute;
    z-index: 2;
    inset: -2px -2px;
    border: solid #217346;
    border-width: 2px 0;
}
.frame::after {
    content: "";
    position: absolute;
    right: -1px;
    bottom: -3px;
    width: 6px;
    height: 5px;
    background: #217346;
    border: solid #fff;
    border-width: 0 0 0 1px;
}
.hint {
    position: absolute;
    z-index: 3;
    top: 28px;
    left: 20px;
    height: 19px;
    padding: 0 5px;
    border: 1px solid #b5b5b5;
    background: #fff;
    box-shadow: 1px 2px 3px rgba(0, 0, 0, 0.25);
    color: #666;
    font: 12px/16px "Open Sans", sans-serif;
    white-space: nowrap;
}
.vscroll {
    display: flex;
    flex-direction: column;
    width: 15px;
    margin: 2px 4px 0 3px;
}
.vscroll button, .hscroll button {
    width: 15px;
    height: 15px;
    border: 1px solid #999;
    background: #fff;
}
.track {
    flex: 1;
    background: #f1f1f1;
}
.thumb {
    border: 1px solid #999;
    background: #fff;
}
.vscroll .thumb {
    height: 90%;
}

/* sheet tabs */
.sheets {
    display: flex;
    height: 28px;
    padding: 0 22px 0 15px;
}
.nav {
    width: 28px;
    height: 28px;
}
.sheet {
    position: relative;
    width: 65px;
    height: 26px;
    margin: -1px 33px 0 29px;
    border: solid #999;
    border-width: 0 1px 2px;
    border-bottom-color: #217346;
    background: #fff;
    color: #217346;
    font: bold 14px/28px Lato, sans-serif;
    text-align: center;
}
.add {
    height: 28px;
}
.sheets .dots {
    margin: 8px 15px 0 auto;
}
.hscroll {
    display: flex;
    width: 39%;
    height: 15px;
    margin-top: 7px;
}
.hscroll .track {
    display: flex;
}
.hscroll .thumb {
    width: 92%;
}

/* status bar */
.status {
    display: flex;
    align-items: center;
    height: 21px;
    padding: 0 9px 0 12px;
    border-top: 1px solid #c6c6c6;
    background: #f3f3f3;
    color: #333;
}
.mode {
    width: 50px;
}
.access {
    gap: 2px;
    margin-left: 17px;
}
.views {
    display: flex;
    gap: 26px;
    margin: 0 19px 0 auto;
}
.zoom {
    display: flex;
    align-items: center;
    gap: 4px;
    color: #b1b1b1;
}
.zoom span {
    margin-left: 10px;
}
.zoom input {
    appearance: none;
    width: 100px;
    height: 8px;
    background: linear-gradient(#333, #333) center / 100% 1px no-repeat;
}
.zoom input::-webkit-slider-thumb {
    appearance: none;
    width: 2px;
    height: 6px;
    background: #222;
}
```
